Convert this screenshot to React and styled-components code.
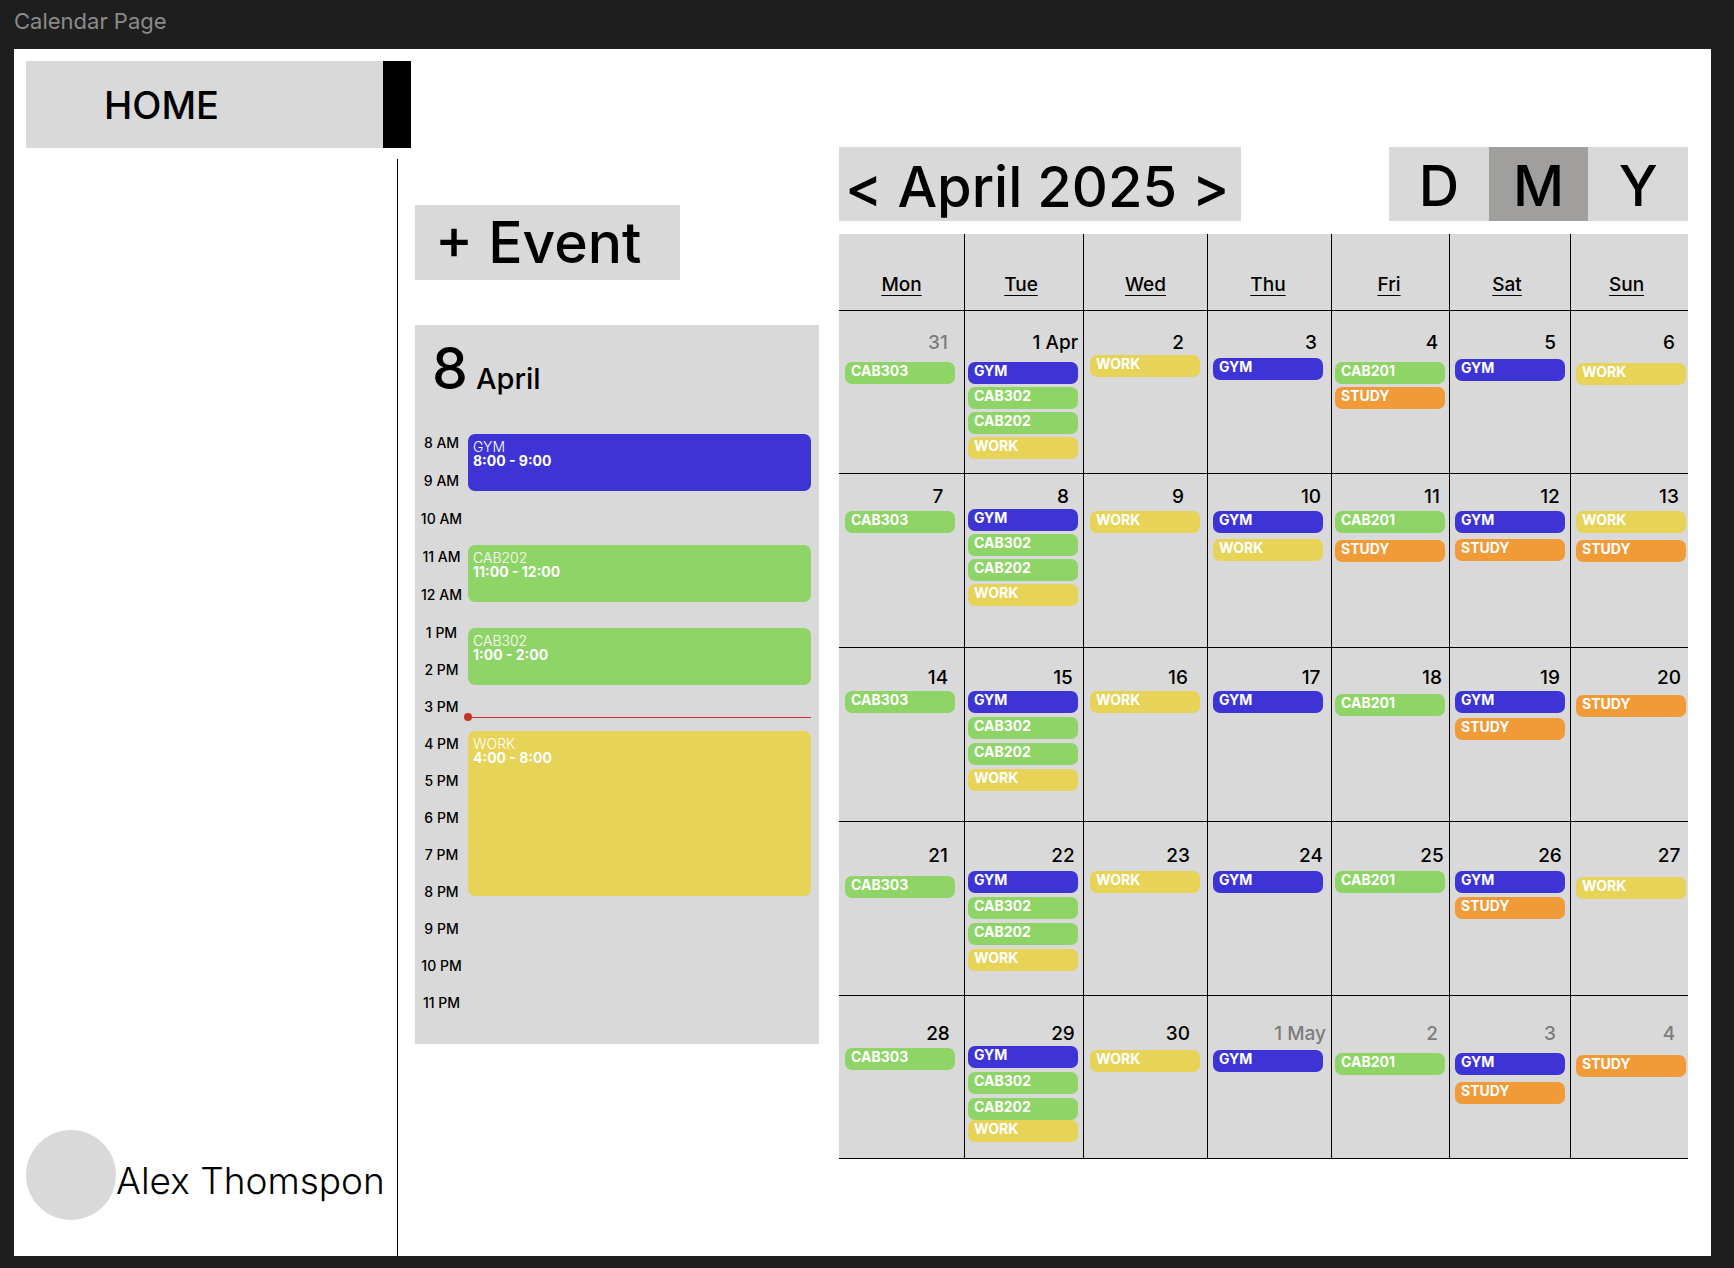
import React from "react";
import styled, { createGlobalStyle } from "styled-components";

const colors = {
  canvas: "#1e1e1e",
  panel: "#d9d9d9",
  active: "#a19f9d",
  muted: "#7c7c7c",
  now: "#c83027",
};

const eventColors = {
  GYM: "#3e34d5",
  CAB201: "#8fd466",
  CAB202: "#8fd466",
  CAB302: "#8fd466",
  CAB303: "#8fd466",
  WORK: "#e6d357",
  STUDY: "#f19a38",
};

const GlobalStyle = createGlobalStyle`
  *, *::before, *::after { box-sizing: border-box; }
  body {
    margin: 0;
    background: ${colors.canvas};
    color: #000;
    font-family: Inter, "Liberation Sans", sans-serif;
  }
  button {
    font: inherit;
    color: inherit;
    border: 0;
    padding: 0;
    background: transparent;
    cursor: pointer;
  }
`;

const Canvas = styled.div`
  display: flex;
  flex-direction: column;
  min-height: 100vh;
  padding: 0 23px 12px 14px;
`;

const FrameLabel = styled.header`
  height: 49px;
  padding-top: 8px;
  font-size: 22px;
  line-height: 26px;
  color: #8a8a8a;
`;

const Frame = styled.div`
  flex: 1;
  display: flex;
  background: #fff;
`;

const Sidebar = styled.aside`
  flex: none;
  width: 384px;
  display: flex;
  flex-direction: column;
  gap: 11px;
  padding-top: 12px;
`;

const HomeLink = styled.a`
  display: flex;
  align-items: center;
  height: 87px;
  margin: 0 -13px 0 12px;
  padding-left: 78px;
  border-right: 28px solid #000;
  background: ${colors.panel};
  color: inherit;
  font-size: 38px;
  font-weight: 450;
  text-decoration: none;
`;

const SidebarBody = styled.div`
  flex: 1;
  display: flex;
  align-items: flex-end;
  padding: 0 0 36px 12px;
  border-right: 1px solid #000;
`;

const Profile = styled.div`
  display: flex;
  align-items: center;
  font-size: 37px;
  font-weight: 300;
  line-height: 46px;
  white-space: nowrap;
`;

const Avatar = styled.span`
  flex: none;
  width: 90px;
  height: 90px;
  border-radius: 50%;
  background: ${colors.panel};
`;

const ProfileName = styled.span`
  padding-top: 12px;
`;

const Content = styled.main`
  flex: 1;
  min-width: 0;
  display: flex;
  align-items: flex-start;
  gap: 20px;
  padding: 98px 23px 0 17px;
`;

const DayColumn = styled.section`
  flex: none;
  width: 404px;
  display: flex;
  flex-direction: column;
  align-items: flex-start;
  gap: 45px;
  padding-top: 58px;
`;

const AddEventButton = styled.button`
  width: 265px;
  height: 75px;
  padding-left: 20px;
  background: ${colors.panel};
  font-size: 57px;
  font-weight: 450;
  line-height: 74px;
  text-align: left;
`;

const DayPanel = styled.div`
  width: 100%;
  padding: 10px 8px 23px 0;
  background: ${colors.panel};
`;

const DayHeading = styled.h2`
  display: flex;
  align-items: baseline;
  gap: 8px;
  margin: 0 0 21px;
  padding-left: 17px;
  font-size: 57px;
  font-weight: 450;
  line-height: 68px;
`;

const DayMonth = styled.span`
  font-size: 29px;
  line-height: 32px;
`;

const Timeline = styled.div`
  display: grid;
  grid-template-columns: 53px 1fr;
`;

const Hours = styled.ol`
  margin: 0;
  padding: 0;
  list-style: none;
  font-size: 14px;
  font-weight: 500;
  text-align: center;
`;

const Hour = styled.li`
  line-height: ${(p) => (p.$morning ? 38 : 37)}px;
`;

const Agenda = styled.div`
  padding-top: 10px;
`;

const AgendaEvent = styled.article`
  height: ${(p) => p.$height}px;
  margin-bottom: ${(p) => p.$after}px;
  padding: 6px 5px;
  border-radius: 7px;
  background: ${(p) => p.$color};
  color: #fff;
  font-size: 14px;
  font-weight: 300;
  line-height: 14px;
`;

const AgendaTime = styled.time`
  display: block;
  font-weight: 700;
`;

const NowLine = styled.div`
  display: flex;
  align-items: center;
  height: 8px;
  margin: 0 0 10px -4px;

  &::before {
    content: "";
    width: 8px;
    height: 8px;
    border-radius: 50%;
    background: ${colors.now};
  }

  &::after {
    content: "";
    flex: 1;
    height: 1px;
    background: ${colors.now};
  }
`;

const Calendar = styled.section`
  flex: 1;
  min-width: 0;
`;

const Toolbar = styled.div`
  display: flex;
  justify-content: space-between;
  margin-bottom: 13px;
  font-size: 56px;
  font-weight: 450;
  line-height: 68px;
`;

const MonthPicker = styled.div`
  display: flex;
  gap: 15px;
  width: 402px;
  padding: 6px 0 0 6px;
  background: ${colors.panel};
  white-space: nowrap;
`;

const MonthTitle = styled.h1`
  margin: 0;
  font: inherit;
`;

const ViewSwitch = styled.div`
  display: flex;
  width: 299px;
`;

const ViewButton = styled.button`
  flex: 1;
  padding-top: 4px;
  background: ${(p) => (p.$active ? colors.active : colors.panel)};
`;

const MonthTable = styled.table`
  width: 100%;
  table-layout: fixed;
  border-collapse: separate;
  border-spacing: 0;
  background: ${colors.panel};
  font-size: 19px;
  font-weight: 450;
  line-height: 24px;
`;

const Weekday = styled.th`
  height: 77px;
  padding: 39px ${(p) => p.$inset}px 0 0;
  border-bottom: 1px solid #000;
  font-weight: 450;
  text-decoration: underline;
  text-decoration-thickness: 1px;
  text-underline-offset: 4px;
  vertical-align: top;

  &:not(:last-child) {
    border-right: 1px solid #000;
  }
`;

const DayCell = styled.td`
  height: ${(p) => p.$height}px;
  padding: ${(p) => p.$top}px 0 0;
  border-bottom: 1px solid #000;
  vertical-align: top;

  &:not(:last-child) {
    border-right: 1px solid #000;
  }
`;

const DateLine = styled.div`
  display: flex;
  justify-content: flex-end;
  padding-right: ${(p) => p.$inset}px;
  color: ${(p) => (p.$muted ? colors.muted : "#000")};
`;

const DateNumber = styled.time`
  min-width: 24px;
  margin-right: ${(p) => (p.$named ? -3 : 0)}px;
  text-align: center;
  white-space: nowrap;
`;

const ChipList = styled.ul`
  display: flex;
  flex-direction: column;
  gap: ${(p) => p.$gap}px;
  margin: 0;
  padding: ${(p) => p.$top}px 0 0 ${(p) => p.$inset}px;
  list-style: none;
`;

const Chip = styled.li`
  width: 110px;
  max-width: 100%;
  height: 22px;
  margin-top: ${(p) => (p.$flush ? -4 : 0)}px;
  padding-left: 6px;
  border-radius: 7px;
  background: ${(p) => p.$color};
  color: #fff;
  font-size: 14px;
  font-weight: 700;
  line-height: 18px;
`;

const columns = [
  { name: "Mon", width: 126, labelInset: 0, chipInset: 6, dateInset: 14 },
  { name: "Tue", width: 119, labelInset: 6, chipInset: 3, dateInset: 8 },
  { name: "Wed", width: 124, labelInset: 0, chipInset: 6, dateInset: 17 },
  { name: "Thu", width: 124, labelInset: 3, chipInset: 5, dateInset: 8 },
  { name: "Fri", width: 118, labelInset: 3, chipInset: 3, dateInset: 5 },
  { name: "Sat", width: 121, labelInset: 6, chipInset: 5, dateInset: 8 },
  { name: "Sun", width: 117, labelInset: 6, chipInset: 5, dateInset: 7 },
];

const day = (label, events, top = 2, gap = 4, muted = false) => ({
  label,
  events,
  top,
  gap,
  muted,
});

const busy = ["GYM", "CAB302", "CAB202", "WORK"];

const weeks = [
  {
    height: 163,
    top: 20,
    days: [
      day("31", ["CAB303"], 7, 4, true),
      day("1 Apr", busy, 7, 3),
      day("2", ["WORK"], 0),
      day("3", ["GYM"], 3),
      day("4", ["CAB201", "STUDY"], 7, 3),
      day("5", ["GYM"], 4),
      day("6", ["WORK"], 8),
    ],
  },
  {
    height: 174,
    top: 11,
    days: [
      day("7", ["CAB303"]),
      day("8", busy, 0, 3),
      day("9", ["WORK"]),
      day("10", ["GYM", "WORK"], 2, 6),
      day("11", ["CAB201", "STUDY"], 2, 7),
      day("12", ["GYM", "STUDY"], 2, 6),
      day("13", ["WORK", "STUDY"], 2, 7),
    ],
  },
  {
    height: 174,
    top: 18,
    days: [
      day("14", ["CAB303"], 1),
      day("15", busy, 1),
      day("16", ["WORK"], 1),
      day("17", ["GYM"], 1),
      day("18", ["CAB201"], 4),
      day("19", ["GYM", "STUDY"], 1, 5),
      day("20", ["STUDY"], 5),
    ],
  },
  {
    height: 174,
    top: 22,
    days: [
      day("21", ["CAB303"], 8),
      day("22", busy, 3),
      day("23", ["WORK"], 3),
      day("24", ["GYM"], 3),
      day("25", ["CAB201"], 3),
      day("26", ["GYM", "STUDY"], 3),
      day("27", ["WORK"], 9),
    ],
  },
  {
    height: 163,
    top: 26,
    days: [
      day("28", ["CAB303"], 2),
      { ...day("29", busy, 0), flushLast: true },
      day("30", ["WORK"], 4),
      day("1 May", ["GYM"], 4, 4, true),
      day("2", ["CAB201"], 7, 4, true),
      day("3", ["GYM", "STUDY"], 7, 7, true),
      day("4", ["STUDY"], 9, 4, true),
    ],
  },
];

const hours = [
  "8 AM", "9 AM", "10 AM", "11 AM", "12 AM", "1 PM", "2 PM", "3 PM",
  "4 PM", "5 PM", "6 PM", "7 PM", "8 PM", "9 PM", "10 PM", "11 PM",
];

const pastEvents = [
  { name: "GYM", time: "8:00 - 9:00", height: 57, after: 54 },
  { name: "CAB202", time: "11:00 - 12:00", height: 57, after: 26 },
  { name: "CAB302", time: "1:00 - 2:00", height: 57, after: 28 },
];

const upcomingEvents = [
  { name: "WORK", time: "4:00 - 8:00", height: 165, after: 0 },
];

function AgendaItem({ item }) {
  return (
    <AgendaEvent
      $height={item.height}
      $after={item.after}
      $color={eventColors[item.name]}
    >
      {item.name}
      <AgendaTime>{item.time}</AgendaTime>
    </AgendaEvent>
  );
}

export default function App() {
  return (
    <>
      <GlobalStyle />
      <Canvas>
        <FrameLabel>Calendar Page</FrameLabel>
        <Frame>
          <Sidebar>
            <HomeLink href="#home">HOME</HomeLink>
            <SidebarBody>
              <Profile>
                <Avatar />
                <ProfileName>Alex Thomspon</ProfileName>
              </Profile>
            </SidebarBody>
          </Sidebar>

          <Content>
            <DayColumn>
              <AddEventButton type="button">+ Event</AddEventButton>
              <DayPanel>
                <DayHeading>
                  8 <DayMonth>April</DayMonth>
                </DayHeading>
                <Timeline>
                  <Hours>
                    {hours.map((hour) => (
                      <Hour key={hour} $morning={hour.endsWith("AM")}>
                        {hour}
                      </Hour>
                    ))}
                  </Hours>
                  <Agenda>
                    {pastEvents.map((item) => (
                      <AgendaItem key={item.name} item={item} />
                    ))}
                    <NowLine />
                    {upcomingEvents.map((item) => (
                      <AgendaItem key={item.name} item={item} />
                    ))}
                  </Agenda>
                </Timeline>
              </DayPanel>
            </DayColumn>

            <Calendar>
              <Toolbar>
                <MonthPicker>
                  <button type="button">&lt;</button>
                  <MonthTitle>April 2025</MonthTitle>
                  <button type="button">&gt;</button>
                </MonthPicker>
                <ViewSwitch>
                  {["D", "M", "Y"].map((view) => (
                    <ViewButton
                      key={view}
                      type="button"
                      $active={view === "M"}
                      aria-pressed={view === "M"}
                    >
                      {view}
                    </ViewButton>
                  ))}
                </ViewSwitch>
              </Toolbar>

              <MonthTable>
                <colgroup>
                  {columns.map((column) => (
                    <col key={column.name} width={column.width} />
                  ))}
                </colgroup>
                <thead>
                  <tr>
                    {columns.map((column) => (
                      <Weekday
                        key={column.name}
                        scope="col"
                        $inset={column.labelInset}
                      >
                        {column.name}
                      </Weekday>
                    ))}
                  </tr>
                </thead>
                <tbody>
                  {weeks.map((week) => (
                    <tr key={week.days[0].label}>
                      {week.days.map((d, i) => (
                        <DayCell
                          key={d.label}
                          $height={week.height}
                          $top={week.top}
                        >
                          <DateLine $inset={columns[i].dateInset} $muted={d.muted}>
                            <DateNumber $named={d.label.includes(" ")}>
                              {d.label}
                            </DateNumber>
                          </DateLine>
                          <ChipList
                            $top={d.top}
                            $gap={d.gap}
                            $inset={columns[i].chipInset}
                          >
                            {d.events.map((name, n) => (
                              <Chip
                                key={name}
                                $color={eventColors[name]}
                                $flush={
                                  d.flushLast && n === d.events.length - 1
                                }
                              >
                                {name}
                              </Chip>
                            ))}
                          </ChipList>
                        </DayCell>
                      ))}
                    </tr>
                  ))}
                </tbody>
              </MonthTable>
            </Calendar>
          </Content>
        </Frame>
      </Canvas>
    </>
  );
}
